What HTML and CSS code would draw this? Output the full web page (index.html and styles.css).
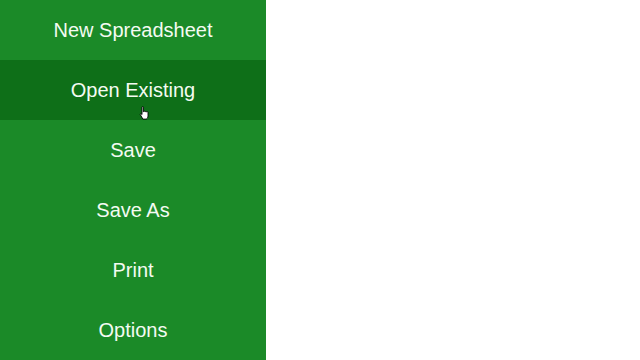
FILE: index.html
```html
<!DOCTYPE html>
<html lang="en">
<head>
    <meta charset="UTF-8">
    <meta name="viewport" content="width=device-width, initial-scale=1.0">
    <title>Spreadsheet Menu</title>
    <link rel="stylesheet" href="styles.css">
</head>
<body>
    <div class="sidebar">
        <a href="#" class="menu-item">New Spreadsheet</a>
        <a href="#" class="menu-item active">Open Existing
            <svg class="cursor" width="11" height="14" viewBox="0 0 11 14">
                <path d="M3 1.2c0-.7 1.4-.7 1.4 0v4.6l.3-.1c.1-.6 1.3-.6 1.4 0l.2.1c.2-.5 1.2-.5 1.3.1l.2.1c.3-.4 1.2-.3 1.2.3v3.6c0 1.4-.8 2.6-1.6 3.2H3.9L1.3 8.6c-.4-.6.3-1.2.9-.8L3 8.6z" fill="#fff" stroke="#000" stroke-width="0.9"/>
            </svg>
        </a>
        <a href="#" class="menu-item">Save</a>
        <a href="#" class="menu-item">Save As</a>
        <a href="#" class="menu-item">Print</a>
        <a href="#" class="menu-item">Options</a>
    </div>
</body>
</html>
```

FILE: styles.css
```css
body {
    margin: 0;
    font-family: "Liberation Sans", Arial, sans-serif;
    background-color: #ffffff;
    height: 360px;
    overflow: hidden;
}
.sidebar {
    width: 266px;
    height: 360px;
    background-color: #1b8a28;
    display: flex;
    flex-direction: column;
}
.menu-item {
    position: relative;
    height: 60px;
    display: flex;
    align-items: center;
    justify-content: center;
    color: #f4fbf2;
    font-size: 20px;
    text-decoration: none;
}
.menu-item.active {
    background-color: #0e6f18;
}
.cursor {
    position: absolute;
    left: 139px;
    top: 46px;
}
```
